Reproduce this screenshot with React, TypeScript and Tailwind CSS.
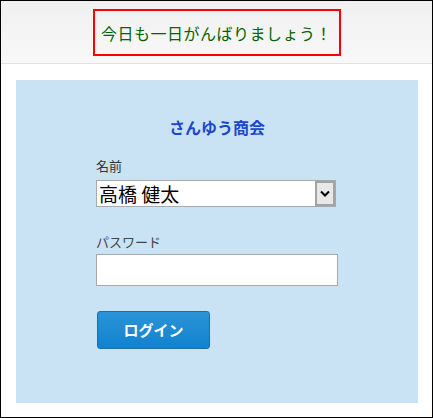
import React from "react";

export default function App() {
  const jp = { fontFamily: '"Noto Sans CJK JP", "Noto Sans", sans-serif' };
  return (
    <div className="w-[433px] h-[418px] border border-black bg-white flex flex-col" style={jp}>
      <div className="h-[63px] shrink-0 bg-gradient-to-b from-[#f0f0f0] to-[#f8f8f8] border-b border-[#e2e2e2] flex justify-center pt-[8px]">
        <div className="w-[248px] h-[47px] border-2 border-[#ff0000] flex items-center justify-center text-[16px] leading-[20px] text-[#006400] whitespace-nowrap tracking-[0.5px]">
          今日も一日がんばりましょう！
        </div>
      </div>
      <div className="flex-1 pt-[16px] pl-[15px] pr-[14px] pb-[14px]">
        <div className="h-full bg-[#c9e3f5] flex flex-col">
          <div className="mt-[37px] text-center text-[16px] font-bold leading-[20px] text-[#1a48cc]">
            さんゆう商会
          </div>
          <div className="pl-[80px] flex flex-col">
            <div className="mt-[20px] text-[13px] leading-[18px] text-[#333]">名前</div>
            <div className="mt-[5px] w-[240px] h-[27px] border border-[#a9a9a9] bg-white flex items-stretch">
              <div className="flex-1 pl-[2px] text-[19px] leading-[25px] text-black whitespace-nowrap">高橋 健太</div>
              <div className="w-[20px] bg-[#e8e8e8] border-2 border-[#a3a3a3] flex items-center justify-center">
                <svg width="10" height="7" viewBox="0 0 10 7">
                  <path d="M1 1.5 L5 5.5 L9 1.5" stroke="#000" strokeWidth="2" fill="none" />
                </svg>
              </div>
            </div>
            <div className="mt-[26px] text-[13px] leading-[18px] text-[#444]">パスワード</div>
            <div className="mt-[3px] w-[242px] h-[32px] border border-[#a9a9a9] bg-white" />
            <button className="mt-[25px] ml-[1px] w-[113px] h-[38px] rounded-[3px] border border-[#1a6fae] bg-gradient-to-b from-[#2a94d6] to-[#0f82cf] text-white text-[15px] font-bold">
              ログイン
            </button>
          </div>
        </div>
      </div>
    </div>
  );
}
